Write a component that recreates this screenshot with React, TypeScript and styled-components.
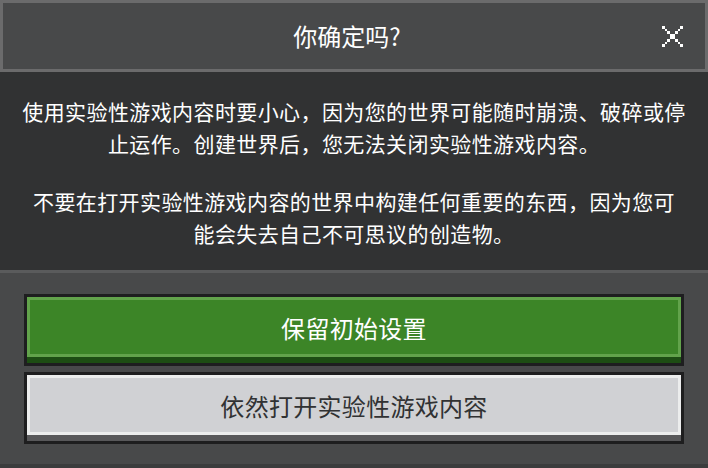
import React from 'react'
import styled, { createGlobalStyle } from 'styled-components'


const GlobalStyle = createGlobalStyle`
    html, body {
        margin: 0;
        padding: 0;
        background: #313233;
    }

    body {
        font-family: "Noto Sans CJK SC", "Noto Sans", sans-serif;
    }
`

const Dialog = styled.div`
    display: flex;
    flex-direction: column;

    width: 708px;
    height: 468px;

    background-color: #313233;
`

const Header = styled.div`
    display: grid;
    grid-template-columns: 1fr auto 1fr;
    align-items: center;

    box-sizing: border-box;
    height: 72px;

    border: 3px solid #6b6b6c;
    background-color: #48494a;
`

const Title = styled.div`
    grid-column: 2;

    margin-right: 14px;

    font-size: 24px;
    line-height: 30px;

    color: #ffffff;
`

const CloseButton = styled.button`
    grid-column: 3;
    justify-self: end;

    display: flex;

    margin: 1px 22px 0 0;
    padding: 0;

    cursor: pointer;

    border: none;
    outline: none;
    background: none;
`

const Body = styled.div`
    display: flex;
    flex-direction: column;
    gap: 26px;

    flex: 1;
    padding: 23px 20px 21px;

    text-align: center;
`

const Paragraph = styled.div`
    font-size: 21px;
    line-height: 32px;
    letter-spacing: 0.4px;

    color: #ffffff;
`

const Line = styled.div`
    white-space: nowrap;
`

const Footer = styled.div`
    display: flex;
    flex-direction: column;
    gap: 6px;

    padding: 21px 24px 20px;

    border-top: 3px solid #5a5b5c;
    border-bottom: 4px solid #3b3c3d;
    background-color: #48494a;
`

type Tone = 'green' | 'gray'

const palette = {
    green: { face: '#3c8527', light: '#62a34b', shade: '#1d4d13', text: '#ffffff' },
    gray: { face: '#d0d1d4', light: '#eceded', shade: '#58585a', text: '#313233' },
}

const ButtonFrame = styled.button<{ $tone: Tone }>`
    display: flex;
    flex-direction: column;

    box-sizing: border-box;
    height: 72px;
    padding: 0;

    cursor: pointer;

    border: 3px solid #1e1e1f;
    outline: none;
    background-color: ${p => palette[p.$tone].shade};
`

const ButtonFace = styled.div<{ $tone: Tone }>`
    display: flex;
    align-items: center;
    justify-content: center;

    box-sizing: border-box;
    height: 60px;

    font-family: "Noto Sans CJK SC", "Noto Sans", sans-serif;
    font-size: 24px;
    letter-spacing: 0.3px;

    color: ${p => palette[p.$tone].text};
    border: 3px solid ${p => palette[p.$tone].light};
    background-color: ${p => palette[p.$tone].face};
`

const CloseIcon: React.FC = () => {
    const cells: [number, number][] = []
    for (let i = 0; i < 8; i++) {
        cells.push([i, i], [7 - i, i])
    }

    return (
        <svg width="21" height="21" viewBox="0 0 8 8" shapeRendering="crispEdges">
            {cells.map(([x, y], i) => <rect key={i} x={x} y={y} width="1" height="1" fill="#ffffff" />)}
        </svg>
    )
}


export default function App() {
    return (
        <>
            <GlobalStyle />
            <Dialog>
                <Header>
                    <Title>你确定吗?</Title>
                    <CloseButton aria-label="关闭"><CloseIcon /></CloseButton>
                </Header>

                <Body>
                    <Paragraph>
                        <Line>使用实验性游戏内容时要小心，因为您的世界可能随时崩溃、破碎或停</Line>
                        <Line>止运作。创建世界后，您无法关闭实验性游戏内容。</Line>
                    </Paragraph>
                    <Paragraph>
                        <Line>不要在打开实验性游戏内容的世界中构建任何重要的东西，因为您可</Line>
                        <Line>能会失去自己不可思议的创造物。</Line>
                    </Paragraph>
                </Body>

                <Footer>
                    <ButtonFrame $tone="green">
                        <ButtonFace $tone="green">保留初始设置</ButtonFace>
                    </ButtonFrame>
                    <ButtonFrame $tone="gray">
                        <ButtonFace $tone="gray">依然打开实验性游戏内容</ButtonFace>
                    </ButtonFrame>
                </Footer>
            </Dialog>
        </>
    )
}
